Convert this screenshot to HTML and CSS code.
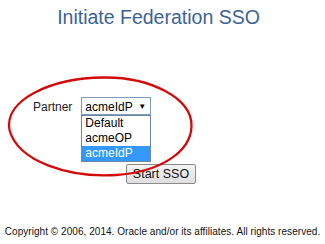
FILE: index.html
```html
<!DOCTYPE html>
<html lang="en">
<head>
<meta charset="utf-8">
<title>Initiate Federation SSO</title>
<link rel="stylesheet" href="styles.css">
</head>
<body>
  <h1 class="title">Initiate Federation SSO</h1>
  <main class="form">
    <div class="row">
      <span class="label">Partner</span>
      <div class="select">
        <span class="value">acmeIdP</span>
        <span class="arrow">▼</span>
        <ul class="options">
          <li class="option">Default</li>
          <li class="option">acmeOP</li>
          <li class="option selected">acmeIdP</li>
        </ul>
      </div>
    </div>
    <div class="actions">
      <button class="btn" type="button">Start SSO</button>
    </div>
  </main>
  <footer class="copyright">Copyright © 2006, 2014. Oracle and/or its affiliates. All rights reserved.</footer>
  <svg class="mark" width="325" height="244" viewBox="0 0 325 244" aria-hidden="true">
    <path d="M 104 77.5 C 150 77, 192 98, 191.5 126 C 191 152, 160 172, 116 175 C 70 178, 18 162, 9.5 130 C 4 100, 50 78, 104 77.5 Z" fill="none" stroke="#d20a0a" stroke-width="2.3"/>
  </svg>
</body>
</html>
```

FILE: styles.css
```css
html, body {
  margin: 0;
  padding: 0;
}
body {
  position: relative;
  width: 325px;
  height: 244px;
  overflow: hidden;
  background: #ffffff;
  font-family: "Liberation Sans", Arial, sans-serif;
  color: #000;
}
.title {
  margin: 6px 0 0;
  padding-right: 8px;
  font-size: 19.5px;
  line-height: 22px;
  font-weight: normal;
  text-align: center;
  color: #3b6396;
}
.form {
  padding-top: 69px;
}
.row {
  display: flex;
  align-items: center;
  gap: 9px;
  padding-left: 33px;
  height: 18px;
}
.label {
  font-size: 12px;
  color: #222;
  padding-top: 1px;
}
.select {
  position: relative;
  box-sizing: border-box;
  width: 70px;
  height: 18px;
  border: 1px solid #7f9db9;
  background: #fff;
  display: flex;
  align-items: center;
  padding-left: 3px;
  font-size: 12px;
}
.value {
  flex: 1;
  padding-top: 1px;
}
.arrow {
  font-size: 8px;
  width: 12px;
  padding-top: 1px;
}
.options {
  position: absolute;
  left: -1px;
  top: 17px;
  width: 70px;
  box-sizing: border-box;
  margin: 0;
  padding: 0;
  list-style: none;
  border: 1px solid #6d86a6;
  background: #fff;
  z-index: 2;
}
.option {
  height: 15px;
  line-height: 15px;
  padding-left: 3px;
  font-size: 12px;
}
.option.selected {
  background: #3399ff;
  color: #fff;
}
.actions {
  margin-top: 49px;
  padding-left: 126px;
}
.btn {
  box-sizing: border-box;
  width: 70px;
  height: 20px;
  padding: 0;
  border: 1px solid #8a8a8a;
  border-radius: 2px;
  background: linear-gradient(#f4f4f4, #dedede);
  font-family: "Liberation Sans", Arial, sans-serif;
  font-size: 12.5px;
  color: #111;
}
.copyright {
  margin-top: 42px;
  font-size: 10px;
  line-height: 12px;
  text-align: center;
  letter-spacing: 0.05px;
  color: #111;
}
.mark {
  position: absolute;
  left: 0;
  top: 0;
  pointer-events: none;
  z-index: 3;
}
```
